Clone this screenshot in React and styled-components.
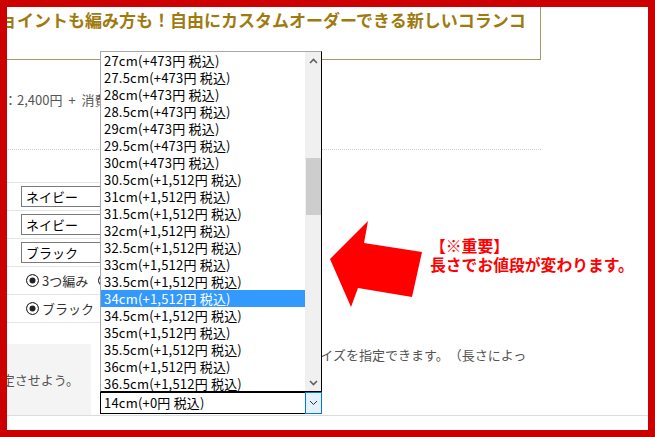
import React from "react";
import styled, { createGlobalStyle } from "styled-components";

const GlobalStyle = createGlobalStyle`
  html, body {
    margin: 0;
    padding: 0;
    background: #fff;
  }
  body {
    font-family: "Noto Sans CJK JP", "Noto Sans", sans-serif;
    text-spacing-trim: space-all;
  }
`;

const lengths = [
  "27", "27.5", "28", "28.5", "29", "29.5", "30", "30.5", "31", "31.5",
  "32", "32.5", "33", "33.5", "34", "34.5", "35", "35.5", "36", "36.5",
];

const priceFor = (len) => (parseFloat(len) <= 30 ? "+473" : "+1,512");

export default function App() {
  return (
    <>
      <GlobalStyle />
      <Frame>
        <Page>
          <TitleBox>
            <Title>ジョイントも編み方も！自由にカスタムオーダーできる新しいコランコ</Title>
          </TitleBox>

          <Price>価格：2,400円 + 消費税</Price>
          <Dotted />

          <OptionTable>
            <OptionRow $indent={21}>
              <Select defaultValue="navy">
                <option value="navy">ネイビー</option>
              </Select>
            </OptionRow>
            <OptionRow $indent={21}>
              <Select defaultValue="navy">
                <option value="navy">ネイビー</option>
              </Select>
            </OptionRow>
            <OptionRow $indent={21}>
              <Select defaultValue="black">
                <option value="black">ブラック</option>
              </Select>
            </OptionRow>
            <OptionRow $indent={26}>
              <RadioLabel>
                <Radio />3つ編み
              </RadioLabel>
              <RadioLabel>
                <Radio />4つ編み
              </RadioLabel>
            </OptionRow>
            <OptionRow $indent={26}>
              <RadioLabel>
                <Radio />ブラック
              </RadioLabel>
            </OptionRow>
          </OptionTable>

          <SizeTable>
            <SizeHead>長さを決定させよう。</SizeHead>
            <SizeCell>
              <Note>
                ご自身の手首に合わせて、お好みのサイズを指定できます。（長さによって価格が変わります）
              </Note>
              <SelectWrap>
                <Popup>
                  <Items>
                    {lengths.map((len) => (
                      <Item key={len} $active={len === "34"}>
                        {len}cm({priceFor(len)}円 税込)
                      </Item>
                    ))}
                  </Items>
                  <Scrollbar>
                    <ScrollArrow>
                      <Chevron up />
                    </ScrollArrow>
                    <Thumb $offset={89} />
                    <ScrollArrow $bottom>
                      <Chevron />
                    </ScrollArrow>
                  </Scrollbar>
                </Popup>
                <SizeSelect>
                  <SizeValue>14cm(+0円 税込)</SizeValue>
                  <DropButton>
                    <Chevron thin />
                  </DropButton>
                </SizeSelect>
              </SelectWrap>
            </SizeCell>
          </SizeTable>
        </Page>

        <Arrow viewBox="0 0 100 97" width="100" height="97">
          <polygon points="5,44 43,6 39,28 97,37 87,82 33,73 26,92" fill="#ff0000" />
        </Arrow>
        <Notice>
          【※重要】
          <br />
          長さでお値段が変わります。
        </Notice>
      </Frame>
    </>
  );
}

function Chevron({ up, thin }) {
  return (
    <svg width="9" height="6" viewBox="0 0 9 6">
      <path
        d={up ? "M1 5 L4.5 1.5 L8 5" : "M1 1 L4.5 4.5 L8 1"}
        fill="none"
        stroke={thin ? "#333" : "#606060"}
        strokeWidth={thin ? 1 : 1.6}
      />
    </svg>
  );
}

const Frame = styled.div`
  position: relative;
  width: 655px;
  height: 437px;
  box-sizing: border-box;
  border: 7px solid #cc0000;
  overflow: hidden;
  background: #fff;
`;

const Page = styled.div`
  display: flow-root;
  margin: -7px 0 0 -7px;
  width: 660px;
`;

const TitleBox = styled.div`
  box-sizing: border-box;
  width: 571px;
  margin: -10px 0 0 -30px;
  padding: 17px 0 27px 12px;
  border: 1px solid #a39a64;
`;

const Title = styled.h1`
  margin: 0;
  font-size: 17px;
  line-height: 24px;
  font-weight: 700;
  color: #9f7a0f;
  white-space: nowrap;
`;

const Price = styled.p`
  margin: 30px 0 0 -22px;
  font-size: 13px;
  line-height: 20px;
  color: #555;
  word-spacing: 3px;
  white-space: nowrap;
`;

const Dotted = styled.div`
  margin-top: 39px;
  width: 541px;
  border-top: 1px dotted #cfcfcf;
`;

const OptionTable = styled.div`
  margin-top: 32px;
  width: 300px;
  border-bottom: 1px solid #e4e4e4;
`;

const OptionRow = styled.div`
  display: flex;
  align-items: center;
  gap: 10px;
  box-sizing: border-box;
  height: 28px;
  padding-left: ${(p) => p.$indent}px;
  border-top: 1px solid #e4e4e4;
`;

const Select = styled.select`
  appearance: none;
  box-sizing: border-box;
  width: 200px;
  height: 21px;
  margin: 0;
  padding: 0 0 0 4px;
  border: 1px solid #7a7a7a;
  border-radius: 0;
  background: #fff;
  font: 13px "Noto Sans CJK JP", sans-serif;
  color: #000;
`;

const RadioLabel = styled.label`
  display: inline-flex;
  align-items: center;
  gap: 3px;
  font-size: 13px;
  line-height: 18px;
  color: #333;
  white-space: nowrap;
`;

const Radio = styled.span`
  display: inline-block;
  box-sizing: border-box;
  width: 13px;
  height: 13px;
  border: 1px solid #333;
  border-radius: 50%;
  background: #222;
  box-shadow: inset 0 0 0 2.5px #fff;
`;

const SizeTable = styled.div`
  display: grid;
  grid-template-columns: 191px 450px;
  margin: 21px 0 0 -100px;
  border-bottom: 1px solid #dcdcdc;
`;

const SizeHead = styled.div`
  display: flex;
  align-items: center;
  justify-content: flex-end;
  padding-right: 12px;
  background: #f4f4f4;
  font-size: 13px;
  color: #555;
  white-space: nowrap;
`;

const SizeCell = styled.div`
  padding: 1px 0 1px 9px;
`;

const Note = styled.p`
  margin: 0;
  width: 430px;
  font-size: 13px;
  line-height: 20px;
  color: #555;
`;

const SelectWrap = styled.div`
  position: relative;
  width: 222px;
  margin-top: 7px;
`;

const Popup = styled.div`
  position: absolute;
  left: 0;
  bottom: 100%;
  display: flex;
  box-sizing: border-box;
  width: 222px;
  height: 341px;
  border: 1px solid;
  border-color: #a8a8a8 #000 #000 #a8a8a8;
  background: #fff;
  overflow: hidden;
`;

const Items = styled.div`
  flex: 1;
`;

const Item = styled.div`
  height: 17px;
  padding-left: 3px;
  font-size: 13px;
  line-height: 17px;
  letter-spacing: 0.2px;
  white-space: nowrap;
  color: ${(p) => (p.$active ? "#fff" : "#000")};
  background: ${(p) => (p.$active ? "#3399ff" : "transparent")};
`;

const Scrollbar = styled.div`
  display: flex;
  flex-direction: column;
  width: 16px;
  background: #f0f0f0;
`;

const ScrollArrow = styled.div`
  display: flex;
  align-items: center;
  justify-content: center;
  height: 17px;
  margin-top: ${(p) => (p.$bottom ? "auto" : "0")};
`;

const Thumb = styled.div`
  height: 57px;
  margin: ${(p) => p.$offset}px 0 0 1px;
  background: #cdcdcd;
`;

const SizeSelect = styled.div`
  display: flex;
  box-sizing: border-box;
  height: 22px;
  border: 1px solid #000;
  border-right: none;
  background: #fff;
`;

const SizeValue = styled.div`
  flex: 1;
  padding-left: 3px;
  font-size: 13px;
  line-height: 20px;
  letter-spacing: 0.2px;
  color: #000;
  white-space: nowrap;
`;

const DropButton = styled.div`
  display: flex;
  align-items: center;
  justify-content: center;
  box-sizing: border-box;
  width: 17px;
  margin: -1px 0;
  border: 1px solid #0078d7;
  background: #e5f1fb;
`;

const Arrow = styled.svg`
  position: absolute;
  left: 318px;
  top: 208px;
`;

const Notice = styled.div`
  position: absolute;
  left: 423px;
  top: 230px;
  font-size: 15.8px;
  line-height: 18.5px;
  font-weight: 700;
  color: #ff0000;
  white-space: nowrap;
`;
